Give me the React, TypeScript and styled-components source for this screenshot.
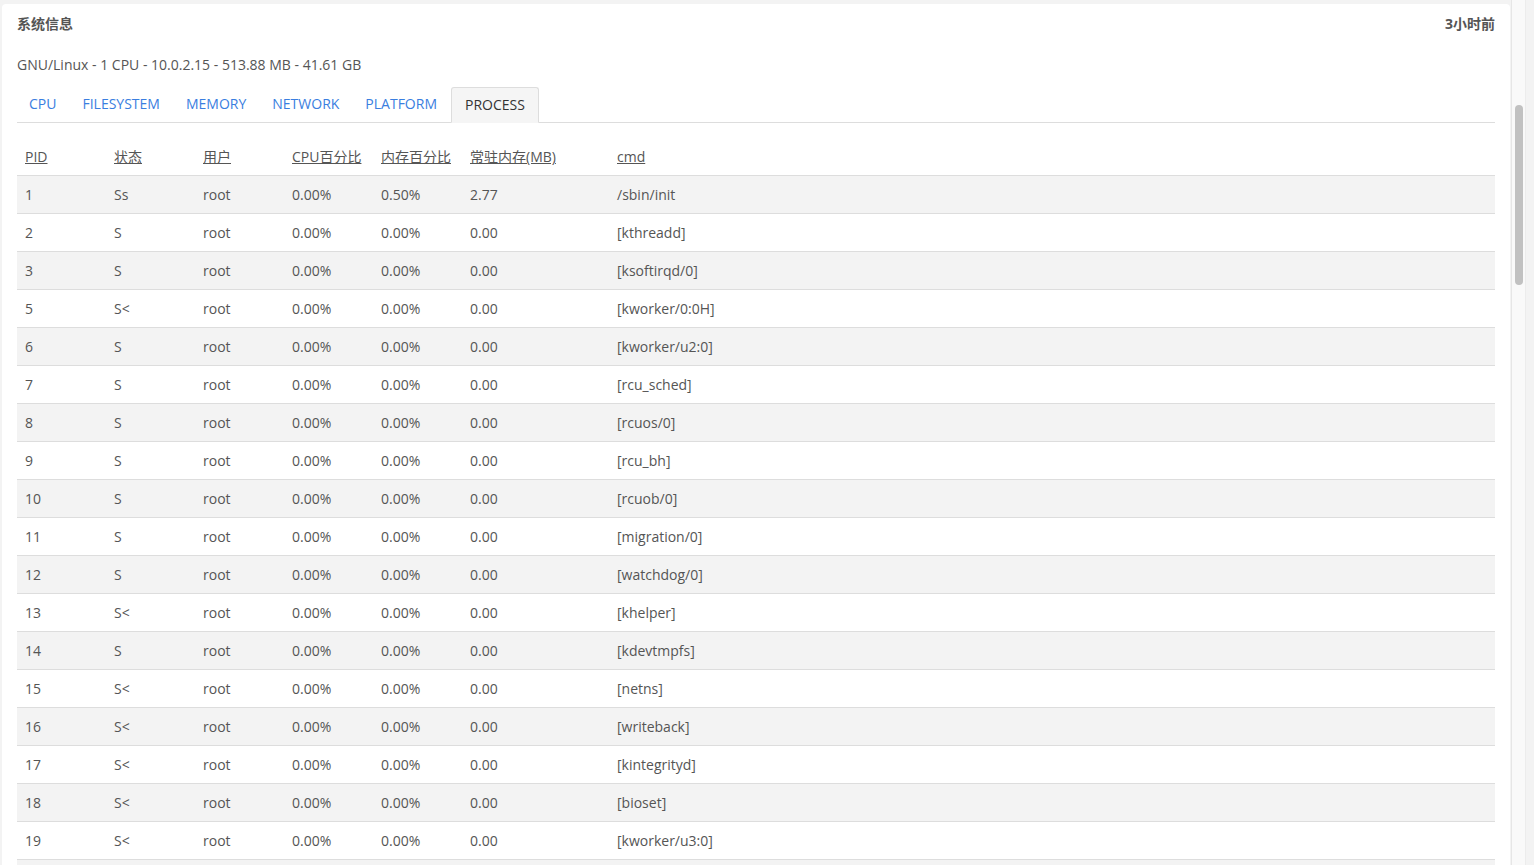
import React from "react";
import styled, { createGlobalStyle } from "styled-components";

const GlobalStyle = createGlobalStyle`
  html, body {
    margin: 0;
    padding: 0;
    height: 100%;
    overflow: hidden;
    background: #f3f3f3;
  }
  body {
    font-family: "Open Sans", "Noto Sans CJK SC", sans-serif;
    font-size: 14px;
    color: #555;
  }
`;

const Page = styled.div`
  display: flex;
  height: 865px;
  overflow: hidden;
`;

const Main = styled.div`
  flex: 1;
  padding: 4px 0 0 2px;
  min-width: 0;
`;

const Card = styled.div`
  background: #fff;
  border-radius: 4px 4px 0 0;
  padding: 0 15px;
  min-height: 1000px;
`;

const TopBar = styled.div`
  display: flex;
  justify-content: space-between;
  align-items: center;
  padding: 10px 0;
  line-height: 20px;
`;

const Title = styled.div`
  font-weight: 700;
  font-size: 14px;
  color: #555;
`;

const Summary = styled.div`
  margin-top: 11px;
  line-height: 20px;
  color: #555;
`;

const TabBar = styled.div`
  display: flex;
  margin-top: 12px;
  border-bottom: 1px solid #ddd;
`;

const Tab = styled.div<{ $active?: boolean }>`
  padding: 7px 11px;
  margin-right: 2px;
  line-height: 20px;
  margin-bottom: -1px;
  border: 1px solid ${(p) => (p.$active ? "#ddd" : "transparent")};
  border-bottom-color: ${(p) => (p.$active ? "#f5f5f5" : "transparent")};
  border-radius: 3px 3px 0 0;
  background: ${(p) => (p.$active ? "#f5f5f5" : "transparent")};
  color: ${(p) => (p.$active ? "#333" : "#3a7ee0")};
  font-size: 14px;
  cursor: pointer;
  margin-top: ${(p) => (p.$active ? "0" : "-1px")};
  padding-left: ${(p) => (p.$active ? "13px" : "11px")};
  padding-right: ${(p) => (p.$active ? "13px" : "11px")};
`;

const Table = styled.div`
  margin-top: 16px;
`;

const cols = "89px 89px 89px 89px 89px 147px 1fr";

const HeadRow = styled.div`
  display: grid;
  grid-template-columns: ${cols};
  height: 36px;
  align-items: center;
  border-bottom: 1px solid #ddd;
`;

const HeadCell = styled.a`
  padding-left: 8px;
  color: #555;
  text-decoration: underline;
  line-height: 20px;
  justify-self: start;
`;

const Row = styled.div<{ $striped: boolean }>`
  display: grid;
  grid-template-columns: ${cols};
  height: 37px;
  align-items: center;
  border-bottom: 1px solid #ddd;
  background: ${(p) => (p.$striped ? "#f3f3f3" : "#fff")};
`;

const Cell = styled.div`
  padding-left: 8px;
  line-height: 20px;
  white-space: nowrap;
`;

const ScrollTrack = styled.div`
  width: 13px;
  margin-left: 1px;
  border-left: 1px solid #e6e6e6;
  border-right: 1px solid #ececec;
  background: #f9f9f9;
  position: relative;
`;

const ScrollThumb = styled.div`
  position: absolute;
  top: 105px;
  left: 3px;
  width: 8px;
  height: 180px;
  border-radius: 4px;
  background: #c1c1c1;
`;

const ScrollEdge = styled.div`
  width: 8px;
  background: #f3f3f3;
`;

type Proc = [string, string, string, string, string, string, string];

const rows: Proc[] = [
  ["1", "Ss", "root", "0.00%", "0.50%", "2.77", "/sbin/init"],
  ["2", "S", "root", "0.00%", "0.00%", "0.00", "[kthreadd]"],
  ["3", "S", "root", "0.00%", "0.00%", "0.00", "[ksoftirqd/0]"],
  ["5", "S<", "root", "0.00%", "0.00%", "0.00", "[kworker/0:0H]"],
  ["6", "S", "root", "0.00%", "0.00%", "0.00", "[kworker/u2:0]"],
  ["7", "S", "root", "0.00%", "0.00%", "0.00", "[rcu_sched]"],
  ["8", "S", "root", "0.00%", "0.00%", "0.00", "[rcuos/0]"],
  ["9", "S", "root", "0.00%", "0.00%", "0.00", "[rcu_bh]"],
  ["10", "S", "root", "0.00%", "0.00%", "0.00", "[rcuob/0]"],
  ["11", "S", "root", "0.00%", "0.00%", "0.00", "[migration/0]"],
  ["12", "S", "root", "0.00%", "0.00%", "0.00", "[watchdog/0]"],
  ["13", "S<", "root", "0.00%", "0.00%", "0.00", "[khelper]"],
  ["14", "S", "root", "0.00%", "0.00%", "0.00", "[kdevtmpfs]"],
  ["15", "S<", "root", "0.00%", "0.00%", "0.00", "[netns]"],
  ["16", "S<", "root", "0.00%", "0.00%", "0.00", "[writeback]"],
  ["17", "S<", "root", "0.00%", "0.00%", "0.00", "[kintegrityd]"],
  ["18", "S<", "root", "0.00%", "0.00%", "0.00", "[bioset]"],
  ["19", "S<", "root", "0.00%", "0.00%", "0.00", "[kworker/u3:0]"],
  ["20", "S<", "root", "0.00%", "0.00%", "0.00", "[kblockd]"],
];

const headers = ["PID", "状态", "用户", "CPU百分比", "内存百分比", "常驻内存(MB)", "cmd"];
const tabs = ["CPU", "FILESYSTEM", "MEMORY", "NETWORK", "PLATFORM", "PROCESS"];

export default function App() {
  return (
    <>
      <GlobalStyle />
      <Page>
        <Main>
          <Card>
            <TopBar>
              <Title>系统信息</Title>
              <Title>3小时前</Title>
            </TopBar>
            <Summary>GNU/Linux - 1 CPU - 10.0.2.15 - 513.88 MB - 41.61 GB</Summary>
            <TabBar>
              {tabs.map((t) => (
                <Tab key={t} $active={t === "PROCESS"}>
                  {t}
                </Tab>
              ))}
            </TabBar>
            <Table>
              <HeadRow>
                {headers.map((h) => (
                  <HeadCell key={h} href="#">
                    {h}
                  </HeadCell>
                ))}
              </HeadRow>
              {rows.map((r, i) => (
                <Row key={r[0]} $striped={i % 2 === 0}>
                  {r.map((c, j) => (
                    <Cell key={j}>{c}</Cell>
                  ))}
                </Row>
              ))}
            </Table>
          </Card>
        </Main>
        <ScrollTrack>
          <ScrollThumb />
        </ScrollTrack>
        <ScrollEdge />
      </Page>
    </>
  );
}
